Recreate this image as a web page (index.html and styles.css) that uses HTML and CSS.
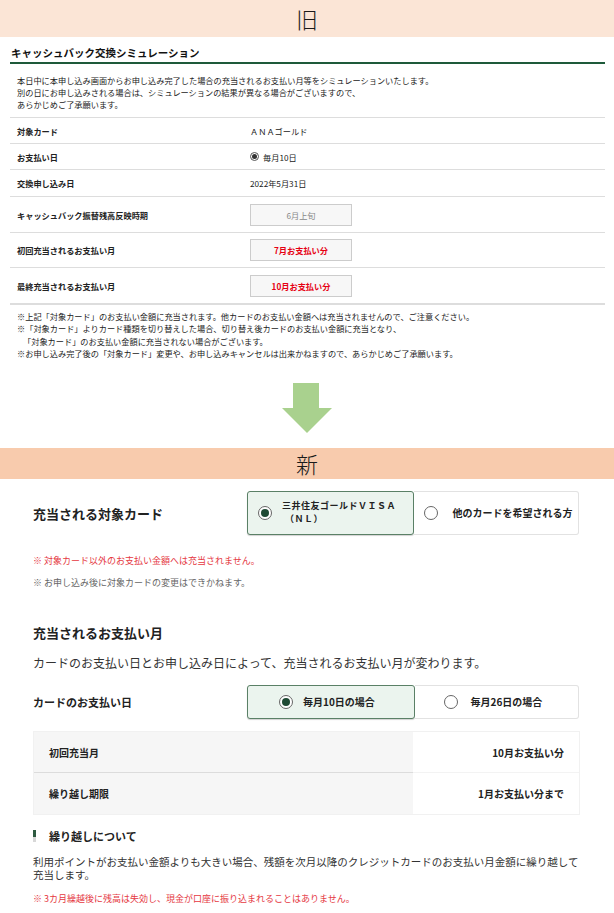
FILE: index.html
```html
<!DOCTYPE html>
<html lang="ja">
<head>
<meta charset="utf-8">
<link rel="stylesheet" href="styles.css">
</head>
<body>
<div class="band band-old">旧</div>
<div class="old">
  <div class="old-title">キャッシュバック交換シミュレーション</div>
  <div class="old-intro">
    本日中に本申し込み画面からお申し込み完了した場合の充当されるお支払い月等をシミュレーションいたします。<br>
    別の日にお申し込みされる場合は、シミュレーションの結果が異なる場合がございますので、<br>
    あらかじめご了承願います。
  </div>
  <div class="old-row"><div class="old-label">対象カード</div><div class="old-val">ＡＮＡゴールド</div></div>
  <div class="old-row"><div class="old-label">お支払い日</div><div class="old-val"><span class="mini-radio"></span>毎月10日</div></div>
  <div class="old-row r3"><div class="old-label">交換申し込み日</div><div class="old-val">2022年5月31日</div></div>
  <div class="old-row tall"><div class="old-label">キャッシュバック振替残高反映時期</div><div class="old-val"><span class="box gray">6月上旬</span></div></div>
  <div class="old-row tall t5"><div class="old-label">初回充当されるお支払い月</div><div class="old-val"><span class="box red">7月お支払い分</span></div></div>
  <div class="old-row tall no-border"><div class="old-label">最終充当されるお支払い月</div><div class="old-val"><span class="box red">10月お支払い分</span></div></div>
  <div class="old-notes">
    <div>※上記「対象カード」のお支払い金額に充当されます。他カードのお支払い金額へは充当されませんので、ご注意ください。</div>
    <div>※「対象カード」よりカード種類を切り替えした場合、切り替え後カードのお支払い金額に充当となり、</div>
    <div class="indent">「対象カード」のお支払い金額に充当されない場合がございます。</div>
    <div>※お申し込み完了後の「対象カード」変更や、お申し込みキャンセルは出来かねますので、あらかじめご了承願います。</div>
  </div>
</div>
<div class="arrow">
  <svg width="50" height="50" viewBox="0 0 50 50"><polygon points="11,0 37,0 37,25 50,25 25,50 0,25 11,25" fill="#a9d18e"/></svg>
</div>
<div class="band band-new">新</div>
<div class="new">
  <div class="field-row first">
    <div class="field-label big">充当される対象カード</div>
    <div class="seg">
      <div class="opt on card1"><span class="radio on"></span><span class="opt-text two"><span class="ln">三井住友ゴールドＶＩＳＡ</span><span class="ln nl">（ＮＬ）</span></span></div>
      <div class="opt card2"><span class="radio"></span><span class="opt-text">他のカードを希望される方</span></div>
    </div>
  </div>
  <p class="note red first-note">※ 対象カード以外のお支払い金額へは充当されません。</p>
  <p class="note gray second-note">※ お申し込み後に対象カードの変更はできかねます。</p>
  <h3 class="sec-title">充当されるお支払い月</h3>
  <p class="desc">カードのお支払い日とお申し込み日によって、充当されるお支払い月が変わります。</p>
  <div class="field-row pay">
    <div class="field-label">カードのお支払い日</div>
    <div class="seg short">
      <div class="opt on pay1"><span class="radio on"></span><span class="opt-text">毎月10日の場合</span></div>
      <div class="opt pay2"><span class="radio"></span><span class="opt-text">毎月26日の場合</span></div>
    </div>
  </div>
  <div class="tbl">
    <div class="tr"><div class="th line">初回充当月</div><div class="td">10月お支払い分</div></div>
    <div class="tr"><div class="th">繰り越し期限</div><div class="td">1月お支払い分まで</div></div>
  </div>
  <div class="sub-h"><span class="bar"></span>繰り越しについて</div>
  <p class="body-text">利用ポイントがお支払い金額よりも大きい場合、残額を次月以降のクレジットカードのお支払い月金額に繰り越して充当します。</p>
  <p class="note red last-note">※ 3カ月繰越後に残高は失効し、現金が口座に振り込まれることはありません。</p>
</div>
</body>
</html>
```
FILE: styles.css
```css
* { box-sizing: border-box; }
body {
  margin: 0;
  width: 614px;
  font-family: "Noto Sans CJK JP", "Noto Sans", sans-serif;
  color: #222;
  background: #fff;
}
p, h3 { margin: 0; }

.band {
  text-align: center;
  font-size: 22px;
  font-weight: 300;
  color: #1a1a1a;
}
.band-old { height: 37px; line-height: 37px; background: #fbe5d6; }
.band-new { height: 31px; line-height: 31px; background: #f8cbad; }

/* old */
.old { margin: 0 9px 0 10px; }
.old-title {
  font-size: 10.5px;
  font-weight: bold;
  line-height: 16px;
  padding: 8px 0 1px 1px;
  border-bottom: 2px solid #1e5a3a;
  color: #111;
}
.old-intro {
  font-size: 8.2px;
  line-height: 12px;
  padding: 10px 7px 7px;
  border-bottom: 1px solid #ddd;
  color: #222;
}
.old-row {
  display: flex;
  align-items: center;
  height: 26px;
  padding-left: 7px;
  border-bottom: 1px solid #ddd;
  font-size: 8.2px;
}
.old-row.r3 { height: 27px; }
.old-row.tall { height: 36px; }
.old-row.t5 { height: 35px; }
.old-label { width: 233px; font-weight: bold; color: #222; }
.old-val { display: flex; align-items: center; color: #222; }
.mini-radio {
  width: 9px; height: 9px;
  border: 1px solid #555;
  border-radius: 50%;
  margin: 0 4px 0 0;
  display: inline-flex;
  align-items: center;
  justify-content: center;
}
.mini-radio::after {
  content: "";
  width: 5px; height: 5px;
  border-radius: 50%;
  background: #333;
}
.box {
  display: block;
  width: 102px;
  height: 22px;
  line-height: 20px;
  border: 1px solid #ccc;
  background: #f7f7f7;
  text-align: center;
}
.box.gray { color: #888; }
.box.red { color: #e60012; font-weight: bold; }
.old-notes {
  border-top: 1px solid #ddd;
  font-size: 8.2px;
  line-height: 12.3px;
  padding: 5px 0 0 7px;
  color: #222;
}
.old-notes .indent { padding-left: 6px; }

.arrow {
  height: 89px;
  padding-top: 24px;
  display: flex;
  justify-content: center;
}

/* new */
.new { padding: 0 34px 0 33px; color: #222; }
.field-row {
  display: flex;
  align-items: center;
  justify-content: space-between;
}
.field-row.first { margin-top: 12px; }
.field-row.pay { margin-top: 14px; }
.field-label { font-size: 11px; font-weight: bold; }
.field-label.big { font-size: 13px; }
.seg {
  width: 332px;
  height: 44px;
  display: flex;
  margin-right: 1px;
}
.seg.short { height: 34px; }
.opt {
  flex: 1;
  display: flex;
  align-items: center;
  border: 1px solid #e2e2e2;
  border-left: none;
  border-radius: 0 3px 3px 0;
  background: #fff;
  font-size: 10px;
  font-weight: bold;
  color: #222;
}
.opt.on {
  background: #ebf4ee;
  border: 1px solid #5a8066;
  border-radius: 3px;
  box-shadow: 0 1px 1px rgba(0,0,0,0.18);
}
.radio {
  flex: none;
  width: 14px; height: 14px;
  border: 1.5px solid #666;
  border-radius: 50%;
  background: #fff;
  display: inline-flex;
  align-items: center;
  justify-content: center;
}
.radio.on::after {
  content: "";
  width: 8px; height: 8px;
  border-radius: 50%;
  background: #1e4a34;
}
.opt-text { line-height: 12px; }
.opt-text.two {
  display: flex;
  flex-direction: column;
  font-size: 9px;
  letter-spacing: 0.5px;
  line-height: 13px;
  margin-top: -3px;
}
.opt-text .nl { padding-left: 3px; }
.opt.card1 { padding-left: 10px; }
.opt.card1 .opt-text { margin-left: 10px; }
.opt.card2 { padding-left: 10px; }
.opt.card2 .opt-text { margin-left: 15px; }
.opt.pay1 { padding-left: 31px; }
.opt.pay1 .opt-text { margin-left: 10px; }
.opt.pay2 { padding-left: 29px; }
.opt.pay2 .opt-text { margin-left: 13px; }

.note { font-size: 9px; line-height: 12px; }
.note.red { color: #e5383f; }
.note.gray { color: #666; }
.first-note { margin-top: 20px; }
.second-note { margin-top: 10px; }
.sec-title { font-size: 13px; font-weight: bold; line-height: 18px; margin-top: 35px; }
.desc { font-size: 12px; line-height: 16px; margin-top: 13px; color: #333; }

.tbl {
  margin-top: 12px;
  border: 1px solid #f1f1f1;
}
.tr { display: flex; height: 41px; }
.th {
  width: 379px;
  background: #f6f6f6;
  padding-left: 15px;
  display: flex;
  align-items: center;
  font-size: 10px;
  font-weight: bold;
}
.th.line { border-bottom: 1px solid #dcdcdc; }
.td {
  flex: 1;
  display: flex;
  align-items: center;
  justify-content: flex-end;
  padding-right: 15px;
  font-size: 10px;
  font-weight: bold;
}
.tr:first-child .td { border-bottom: 1px solid #f3f3f3; }
.sub-h {
  margin-top: 14px;
  display: flex;
  align-items: center;
  font-size: 11px;
  font-weight: bold;
  line-height: 14px;
}
.bar {
  width: 3px;
  height: 12px;
  margin-right: 13px;
  background: linear-gradient(#2d5a40 55%, #d8d8d8 55%);
}
.body-text {
  margin-top: 12px;
  font-size: 10.5px;
  line-height: 13px;
  color: #333;
}
.last-note { margin-top: 12px; }
```
